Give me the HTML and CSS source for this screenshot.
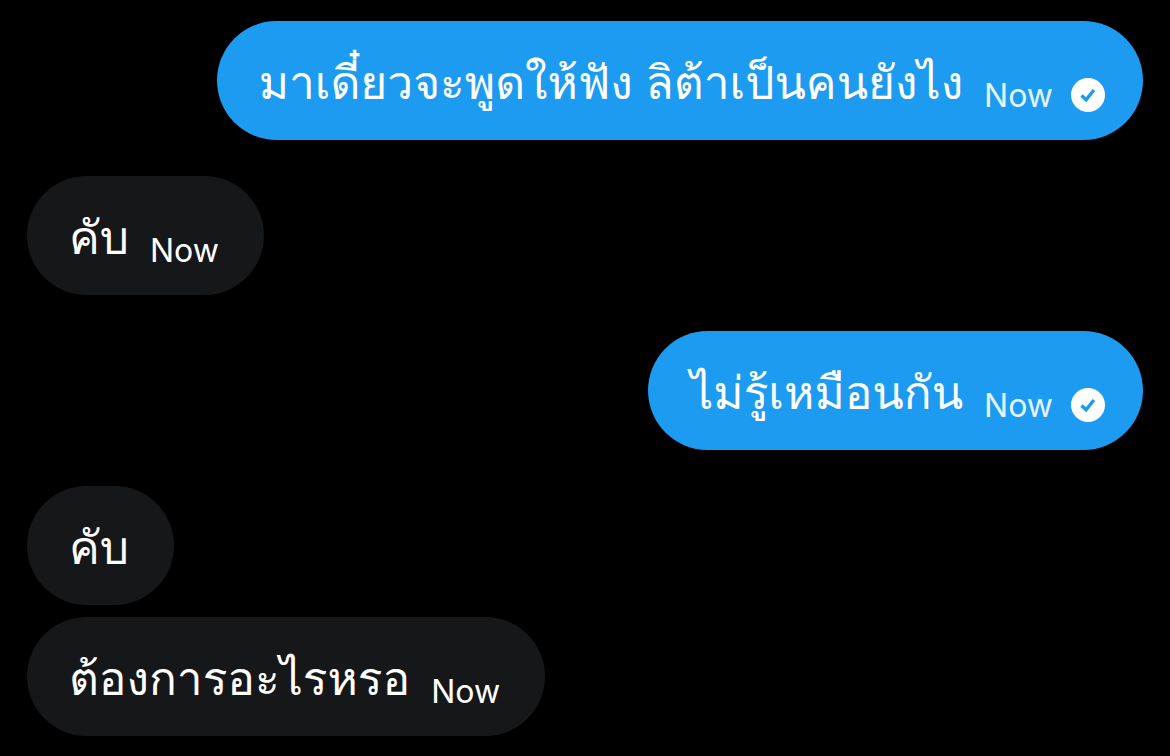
FILE: index.html
```
<!DOCTYPE html>
<html lang="th">
<head>
  <meta charset="utf-8">
  <meta name="viewport" content="width=device-width, initial-scale=1">
  <title>Messages</title>
  <link rel="stylesheet" href="styles.css">
</head>
<body>
  <main class="chat">
    <div class="message sent">
      <p class="text">มาเดี๋ยวจะพูดให้ฟัง ลิต้าเป็นคนยังไง</p>
      <span class="time">Now</span>
      <svg class="status" viewBox="0 0 34 34" role="img" aria-label="Sent">
        <circle cx="17" cy="17" r="17" fill="#fff"/>
        <path d="M10.5 17.5l4.6 4.3 7.8-9.8" fill="none" stroke="#1d9bf0" stroke-width="3.4"/>
      </svg>
    </div>
    <div class="message received">
      <p class="text">คับ</p>
      <span class="time">Now</span>
    </div>
    <div class="message sent">
      <p class="text">ไม่รู้เหมือนกัน</p>
      <span class="time">Now</span>
      <svg class="status" viewBox="0 0 34 34" role="img" aria-label="Sent">
        <circle cx="17" cy="17" r="17" fill="#fff"/>
        <path d="M10.5 17.5l4.6 4.3 7.8-9.8" fill="none" stroke="#1d9bf0" stroke-width="3.4"/>
      </svg>
    </div>
    <div class="group">
      <div class="message received">
        <p class="text">คับ</p>
      </div>
      <div class="message received">
        <p class="text">ต้องการอะไรหรอ</p>
        <span class="time">Now</span>
      </div>
    </div>
  </main>
</body>
</html>
```
FILE: styles.css
```
* {
  box-sizing: border-box;
}

body {
  margin: 0;
  background-color: #000;
  color: #fff;
  font-family: Inter, "Noto Sans", sans-serif;
}

.chat {
  display: flex;
  flex-direction: column;
  gap: 36px;
  padding: 21px 27px 20px;
}

.group {
  display: flex;
  flex-direction: column;
  gap: 12px;
}

.message {
  display: flex;
  align-items: center;
  min-height: 119px;
  padding: 0 45px 0 42px;
  border-radius: 60px;
}

.sent {
  align-self: flex-end;
  padding-right: 38px;
  background-color: #1d9bf0;
}

.received {
  align-self: flex-start;
  background-color: #161719;
}

.text {
  margin: 0;
  padding-top: 4px;
  font-family: "Liberation Sans", Loma, Garuda, Waree, sans-serif;
  font-size: 46px;
  line-height: 60px;
}

.time {
  margin-left: 21px;
  padding-top: 30px;
  font-size: 32px;
  line-height: 40px;
}

.sent .time {
  color: #e4f3fe;
}

.status {
  width: 34px;
  height: 34px;
  margin-top: 29px;
  margin-left: 18px;
}
```
